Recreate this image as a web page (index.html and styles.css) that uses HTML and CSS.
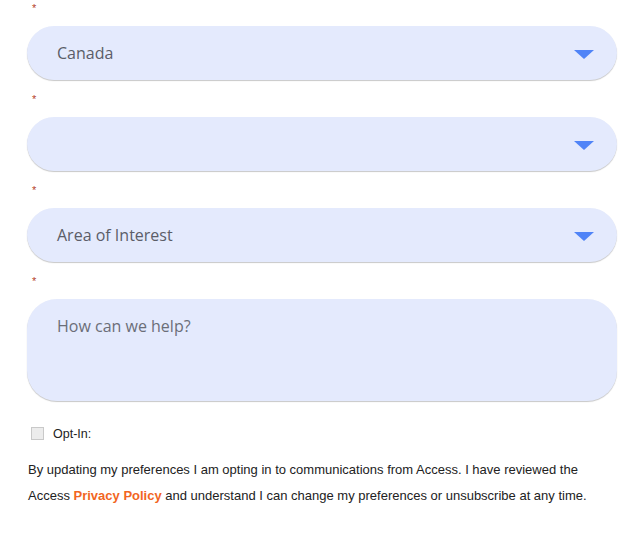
FILE: index.html
```html
<!DOCTYPE html>
<html>
<head>
<meta charset="utf-8">
<link rel="stylesheet" href="styles.css">
</head>
<body>
<form class="form">
  <div class="group first">
    <div class="label"><span class="req">*</span></div>
    <div class="field select">
      <span class="value">Canada</span>
      <span class="arrow"></span>
    </div>
  </div>
  <div class="group">
    <div class="label"><span class="req">*</span></div>
    <div class="field select">
      <span class="value"></span>
      <span class="arrow"></span>
    </div>
  </div>
  <div class="group">
    <div class="label"><span class="req">*</span></div>
    <div class="field select">
      <span class="value">Area of Interest</span>
      <span class="arrow"></span>
    </div>
  </div>
  <div class="group">
    <div class="label"><span class="req">*</span></div>
    <div class="field textarea">
      <span class="placeholder">How can we help?</span>
    </div>
  </div>
  <label class="optin">
    <span class="checkbox"></span>
    <span class="optin-text">Opt-In:</span>
  </label>
  <p class="legal">By updating my preferences I am opting in to communications from Access. I have reviewed the Access <a class="policy" href="#">Privacy Policy</a> and understand I can change my preferences or unsubscribe at any time.</p>
</form>
</body>
</html>
```
FILE: styles.css
```css
html, body {
  margin: 0;
  padding: 0;
  background: #ffffff;
}
.form {
  width: 590px;
  padding-left: 27px;
  display: flex;
  flex-direction: column;
}
.group {
  margin-top: 11px;
  display: flex;
  flex-direction: column;
}
.group.first {
  margin-top: 0;
}
.label {
  height: 26px;
}
.req {
  display: block;
  padding-left: 5px;
  padding-top: 2px;
  font-family: "Liberation Sans", Arial, sans-serif;
  font-size: 11px;
  line-height: 12px;
  color: #b5412c;
}
.field {
  background: #e4eafd;
  box-shadow: 0 1px 1px rgba(0, 0, 0, 0.22);
  font-family: "Open Sans", sans-serif;
  font-size: 16px;
  color: #5b5d68;
  box-sizing: border-box;
}
.select {
  height: 54px;
  border-radius: 27px;
  display: flex;
  align-items: center;
  justify-content: space-between;
  padding: 0 23px 0 30px;
}
.arrow {
  width: 0;
  height: 0;
  border-left: 10px solid transparent;
  border-right: 10px solid transparent;
  border-top: 9px solid #5084f7;
  margin-top: 2px;
}
.textarea {
  height: 102px;
  border-radius: 30px;
  padding: 16px 30px;
}
.placeholder {
  color: #6b6e78;
}
.optin {
  display: flex;
  align-items: center;
  margin-top: 24px;
  padding-left: 4px;
  font-family: "Liberation Sans", Arial, sans-serif;
  font-size: 12.5px;
  color: #222222;
}
.checkbox {
  width: 11px;
  height: 11px;
  border: 1px solid #c9c9c9;
  background: #ececec;
  margin-right: 9px;
}
.optin-text {
  line-height: 16px;
  margin-top: 1px;
}
.legal {
  margin: 15px 0 0 1px;
  font-family: "Liberation Sans", Arial, sans-serif;
  font-size: 13px;
  line-height: 26px;
  color: #222222;
}
.policy {
  color: #f26522;
  font-weight: bold;
  text-decoration: none;
}
```
